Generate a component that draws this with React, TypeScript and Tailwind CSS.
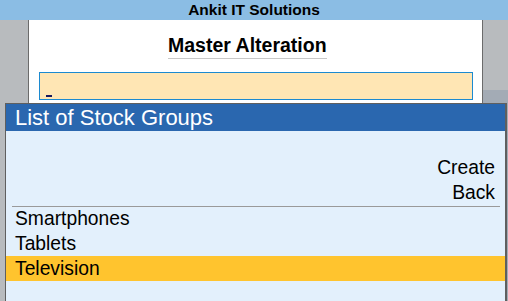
import React from "react";

export default function App() {
  const font = { fontFamily: '"Liberation Sans", Arial, sans-serif' };
  return (
    <div
      className="relative w-[508px] h-[301px] overflow-hidden bg-[#B8BBBE] flex flex-col"
      style={font}
    >
      <div className="h-[20px] bg-[#8BBDE4] flex items-center justify-center text-[15.5px] font-bold text-black leading-[20px]">
        Ankit IT Solutions
      </div>
      <div className="flex flex-1">
        <div className="w-[28px] bg-[#B8BBBE]" />
        <div className="w-[455px] bg-white border-l border-r border-[#6B6B6B] flex flex-col">
          <div className="pl-[139px] pt-[13px]">
            <div className="inline-block text-[19.5px] font-bold leading-[24px] text-black border-b border-[#C8C8C8] pb-[1px]">
              Master Alteration
            </div>
          </div>
          <div className="mt-[13px] ml-[10px] mr-[9px] h-[28px] bg-[#FFE6B4] border border-[#1C8AD0] relative">
            <div className="absolute left-[6px] top-[22px] w-[6px] h-[2px] bg-[#1A1A5E]" />
          </div>
        </div>
        <div className="flex-1 flex flex-col">
          <div className="h-[70px] bg-[#B8BBBE]" />
          <div className="flex-1 bg-[#A3ABB5]" />
        </div>
      </div>

      <div className="absolute left-[5px] top-[103px] w-[502px] h-[220px] border-t border-l border-r-2 border-[#5F5F5F] bg-[#E3F0FC] flex flex-col">
        <div className="h-[27px] bg-[#2A67AF] text-white text-[22px] leading-[27px] pl-[9px]">
          List of Stock Groups
        </div>
        <div className="pt-[24px] pr-[10px] flex flex-col items-end text-[19.3px] leading-[25px] text-black">
          <div>Create</div>
          <div>Back</div>
        </div>
        <div className="mt-[1px] ml-[6px] mr-[5px] h-[1px] bg-[#9A9A9A]" />
        <div className="-mt-[1px] flex flex-col text-[19.3px] leading-[25px] text-black">
          <div className="h-[25px] pl-[9px]">Smartphones</div>
          <div className="h-[25px] pl-[9px]">Tablets</div>
          <div className="h-[25px] pl-[9px] bg-[#FFC42E]">Television</div>
        </div>
      </div>
    </div>
  );
}
